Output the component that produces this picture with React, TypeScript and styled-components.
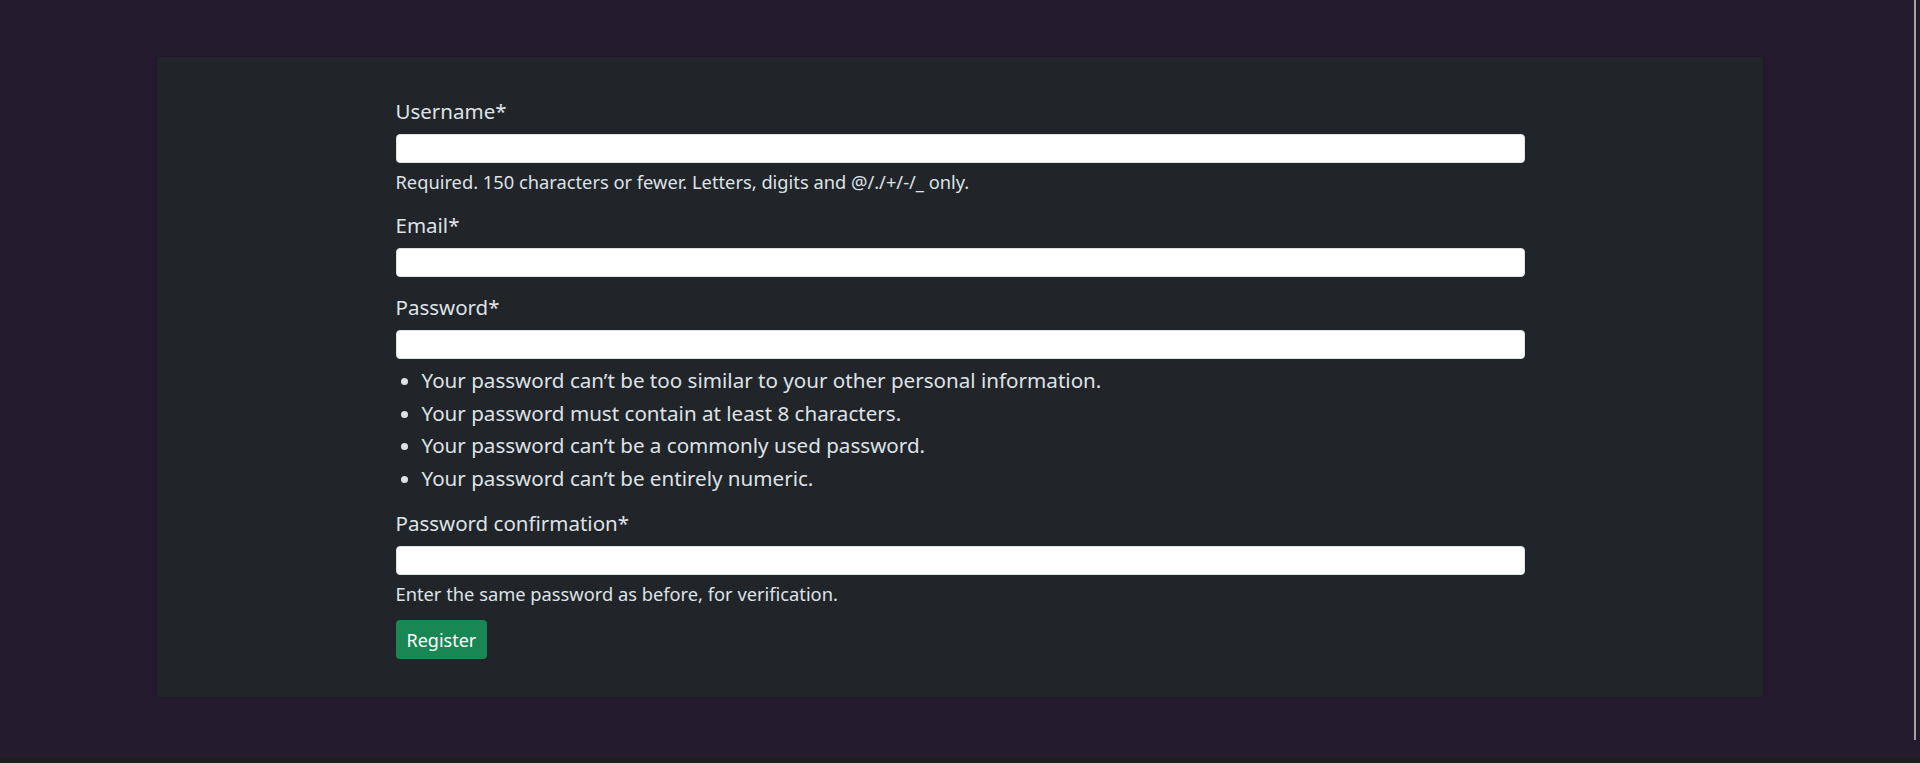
import React from "react";
import styled, { createGlobalStyle } from "styled-components";

const GlobalStyle = createGlobalStyle`
  html, body {
    margin: 0;
    padding: 0;
    background: #241b2e;
    overflow: hidden;
  }
  body {
    font-family: "Noto Sans", "Open Sans", sans-serif;
    color: #dee2e6;
  }
  * {
    box-sizing: border-box;
  }
`;

const Page = styled.div`
  padding: 57px 157px 0;
  min-height: 763px;
`;

const Panel = styled.div`
  background: #212529;
  height: 640px;
  padding-top: 39px;
  box-shadow: 0 0 2px rgba(0, 0, 0, 0.25);
`;

const Form = styled.form`
  width: 1129px;
  margin: 0 auto;
  display: flex;
  flex-direction: column;
`;

const Group = styled.div<{ $gap?: number }>`
  display: flex;
  flex-direction: column;
  margin-bottom: ${(p) => p.$gap ?? 16}px;
`;

const Label = styled.label`
  font-size: 20.5px;
  line-height: 30px;
  margin-bottom: 8px;
  color: #dee2e6;
`;

const Input = styled.input`
  height: 29px;
  width: 100%;
  border: 1px solid #dee2e6;
  border-radius: 4px;
  background: #fff;
  padding: 0 10px;
  font: inherit;
  outline: none;
`;

const HelpText = styled.div`
  margin-top: 6px;
  font-size: 18.3px;
  line-height: 26px;
  color: #dee2e6;
`;

const RuleList = styled.ul`
  margin: 5px 0 0;
  padding-left: 26px;
  font-size: 20.6px;
  line-height: 32.5px;
`;

const Rule = styled.li`
  color: #dee2e6;
`;

const SubmitButton = styled.button`
  align-self: flex-start;
  height: 39px;
  padding: 0 11px;
  margin-top: 13px;
  border: none;
  border-radius: 4px;
  background: #198754;
  color: #fff;
  font-family: inherit;
  font-size: 18px;
  cursor: pointer;
`;

const ScrollThumb = styled.div`
  position: fixed;
  top: 0;
  right: 4px;
  width: 2px;
  height: 740px;
  background: #a3a3a3;
`;

const BottomEdge = styled.div`
  position: fixed;
  left: 0;
  right: 0;
  bottom: 0;
  height: 5px;
  background: #1e1e1e;
`;

const rules = [
  "Your password can’t be too similar to your other personal information.",
  "Your password must contain at least 8 characters.",
  "Your password can’t be a commonly used password.",
  "Your password can’t be entirely numeric.",
];

export default function App() {
  return (
    <>
      <GlobalStyle />
      <Page>
        <Panel>
          <Form onSubmit={(e) => e.preventDefault()}>
            <Group $gap={15}>
              <Label htmlFor="id_username">Username*</Label>
              <Input id="id_username" type="text" />
              <HelpText>
                Required. 150 characters or fewer. Letters, digits and @/./+/-/_ only.
              </HelpText>
            </Group>
            <Group $gap={15}>
              <Label htmlFor="id_email">Email*</Label>
              <Input id="id_email" type="email" />
            </Group>
            <Group $gap={14}>
              <Label htmlFor="id_password1">Password*</Label>
              <Input id="id_password1" type="password" />
              <RuleList>
                {rules.map((r) => (
                  <Rule key={r}>{r}</Rule>
                ))}
              </RuleList>
            </Group>
            <Group $gap={0}>
              <Label htmlFor="id_password2">Password confirmation*</Label>
              <Input id="id_password2" type="password" />
              <HelpText>Enter the same password as before, for verification.</HelpText>
            </Group>
            <SubmitButton type="submit">Register</SubmitButton>
          </Form>
        </Panel>
      </Page>
      <ScrollThumb />
      <BottomEdge />
    </>
  );
}
